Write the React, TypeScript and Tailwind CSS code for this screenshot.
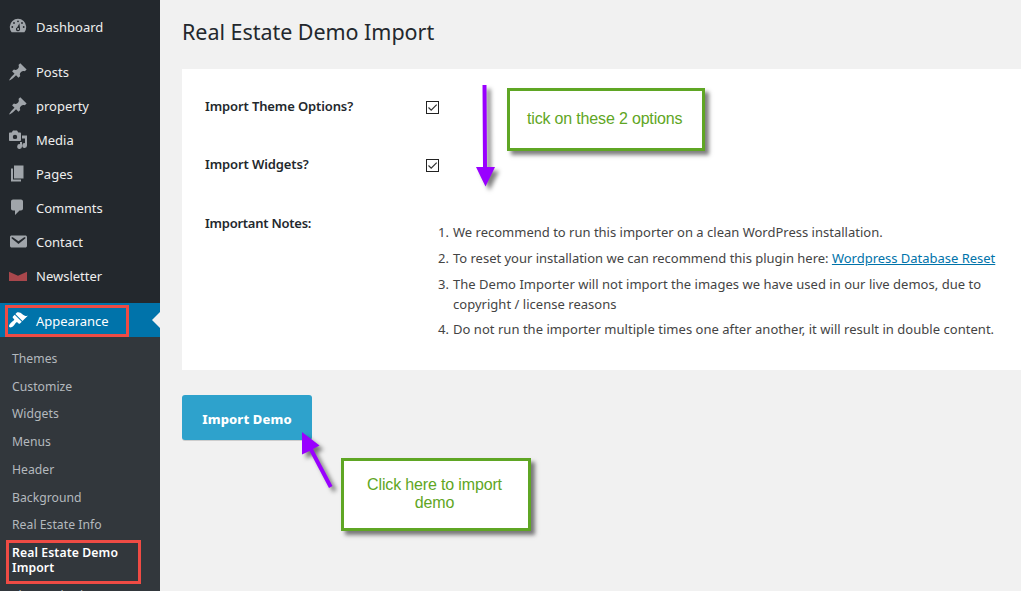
import React from "react";

const items = [
  ["Posts", "pin"],
  ["property", "pin"],
  ["Media", "media"],
  ["Pages", "pages"],
  ["Comments", "comment"],
  ["Contact", "mail"],
  ["Newsletter", "news"],
];

const sub = ["Themes", "Customize", "Widgets", "Menus", "Header", "Background", "Real Estate Info"];

function Icon({ name }: { name: string }) {
  return (
    <svg viewBox="0 0 20 20" className="h-5 w-5 shrink-0 fill-[#a0a5aa]">
      {name === "dash" && (
        <>
          <path d="M3.600 15.200A8.200 8.200 0 1 1 16.400 15.200z" />
          <g className="fill-[#23282d]">
            <circle cx="10" cy="4.300" r="0.900" />
            <circle cx="6" cy="6" r="0.900" />
            <circle cx="14" cy="6" r="0.900" />
            <circle cx="4.300" cy="10" r="0.900" />
            <circle cx="15.700" cy="10" r="0.900" />
            <path d="M11.400 6.200l.7 5.800a2.100 2.100 0 1 1-2.800-1.800z" />
          </g>
          <circle cx="10.100" cy="12" r="1" />
        </>
      )}
      {name === "pin" && (
        <path d="M10.440 3.020l1.820-1.820 6.360 6.350-1.830 1.820c-1.050-.680-2.480-.570-3.410.360l-.750.750c-.920.930-1.040 2.350-.350 3.410l-1.830 1.820-2.410-2.410-2.800 2.790c-.420.420-3.380 2.710-3.800 2.290s1.860-3.390 2.280-3.810l2.790-2.790L4.100 9.360l1.830-1.820c1.050.690 2.480.570 3.400-.360l.750-.750c.930-.920 1.050-2.350.360-3.410z" />
      )}
      {name === "media" && (
        <path fillRule="evenodd" d="M13 10V3.500c0-.550-.450-1-1-1h-1.670L9 .5H5L3.670 2.500H2c-.550 0-1 .450-1 1V10c0 .550.450 1 1 1h10c.550 0 1-.450 1-1zM7 4.700a2.200 2.200 0 1 1 0 4.400 2.200 2.200 0 0 1 0-4.400zM14 5.500h5V15.500a2.400 2.400 0 1 1-2-2.350V8.500h-3V16.500a2.400 2.400 0 1 1-2-2.350V12h2z" />
      )}
      {name === "pages" && <path d="M6 14.500V1.500h9.500v13H6zM5 15.500h8v2H3V4.500h2v11z" />}
      {name === "comment" && (
        <path d="M5 1.500h8c1.100 0 2 .9 2 2v7c0 1.100-.9 2-2 2h-1.500l-4.500 4.500v-4.500H5c-1.100 0-2-.9-2-2v-7c0-1.100.9-2 2-2z" />
      )}
      {name === "mail" && (
        <path d="M3.870 3.500h13.250C18.370 3.500 19 4.090 19 5.290v8.420c0 1.190-.630 1.790-1.880 1.790H3.870c-1.250 0-1.880-.6-1.880-1.790V5.290c0-1.200.630-1.790 1.880-1.790zm6.620 8.600l6.740-5.530c.240-.200.430-.660.130-1.070-.290-.410-.820-.420-1.170-.170l-5.700 3.860L4.800 5.330c-.350-.250-.880-.240-1.170.170-.300.410-.110.870.130 1.070z" />
      )}
      {name === "news" && <path className="fill-[#a8474c]" d="M1 5.800l9 4L19 5.800V15H1z" />}
      {name === "brush" && (
        <path className="fill-white" d="M14.480 11.060L7.410 3.990l1.500-1.500c.5-.560 2.300-.470 3.510.320 1.210.8 1.430 1.280 2.910 2.100 1.180.640 2.450 1.260 4.450.850zm-.710.710L6.700 4.700 4.930 6.470c-.390.390-.390 1.020 0 1.410l1.060 1.060c.390.390.390 1.030 0 1.420-.6.600-1.430 1.110-2.210 1.690-.350.260-.7.530-1.010.840C1.430 14.230.4 16.080 1.400 17.070c.990 1 2.840-.030 4.180-1.360.310-.310.580-.660.850-1.020.570-.780 1.080-1.610 1.690-2.210.390-.390 1.020-.390 1.410 0l1.060 1.060c.390.390 1.020.390 1.410 0z" />
      )}
    </svg>
  );
}

function Check() {
  return (
    <div role="checkbox" aria-checked="true" className="h-[13px] w-[13px] border border-[#222] bg-white">
      <svg viewBox="0 0 11 11" className="h-[11px] w-[11px]">
        <path d="M1.500 5.500L4.200 8.200L9.700 2.700" fill="none" stroke="#333" strokeWidth="1.200" />
      </svg>
    </div>
  );
}

export default function App() {
  return (
    <div className="relative flex h-[591px] w-[1021px] overflow-hidden bg-[#f1f1f1] font-['Noto_Sans',sans-serif] text-[13px] text-[#444]">
      <nav className="h-[591px] w-40 shrink-0 overflow-hidden bg-[#23282d] text-[13px] text-[#eee]">
        <div className="mt-[10px] flex h-[34px] items-center gap-2 pl-2">
          <Icon name="dash" />
          <span className="pt-[2px]">Dashboard</span>
        </div>
        <div className="mt-[11px]">
          {items.map(([label, icon]) => (
            <div key={label} className="flex h-[34px] items-center gap-2 pl-2">
              <Icon name={icon} />
              <span className="pt-[2px]">{label}</span>
            </div>
          ))}
        </div>
        <div className="relative mt-[10px] flex h-[34px] items-center gap-2 bg-[#0073aa] pl-2 text-white">
          <Icon name="brush" />
          <span className="pt-[3px] tracking-[-0.05px]">Appearance</span>
          <svg viewBox="0 0 8 16" className="absolute right-0 top-[9px] h-4 w-2 fill-[#f1f1f1]">
            <path d="M8 0v16L0 8z" />
          </svg>
        </div>
        <div className="h-[260px] bg-[#32373c] pl-3 pt-[8.400px] text-[12.200px] text-[#b4b9be]">
          {sub.map((label) => (
            <div key={label} className="flex h-[27.700px] items-center whitespace-nowrap tracking-[0.03px]">
              {label}
            </div>
          ))}
          <div className="pt-[5.600px] font-semibold leading-[15px] tracking-[0.12px] text-white">
            Real Estate Demo
            <br />
            Import
          </div>
          <div className="mt-[13px] leading-[16px] tracking-[-0.25px]">Theme Check</div>
        </div>
      </nav>

      <main className="flex min-w-0 flex-1 flex-col pl-[22px]">
        <h1 className="mt-[17px] h-[30px] text-[21.500px] leading-[30px] tracking-[-0.04px] text-[#23282d]">
          <span>Real Estate Demo Import</span>
        </h1>
        <section className="mt-[22px] h-[301px] bg-white pl-[23px] text-[#23282d]">
          <div className="flex h-[58px] pt-[27px]">
            <div className="w-[221px] font-semibold leading-5 tracking-[-0.12px]">Import Theme Options?</div>
            <div className="pt-[5px]"><Check /></div>
          </div>
          <div className="flex h-[58px] pt-[27px]">
            <div className="w-[221px] font-semibold leading-5 tracking-[-0.12px]">Import Widgets?</div>
            <div className="pt-[5px]"><Check /></div>
          </div>
          <div className="flex pt-[28px]">
            <div className="w-[221px] shrink-0 font-semibold leading-5 tracking-[-0.25px]">Important Notes:</div>
            <ol className="flex flex-col gap-[6px] pt-[9px] leading-5 text-[#444]">
              <li className="flex h-5 whitespace-nowrap"><span className="w-[27px] pl-[12px]">1.</span><span>We recommend to run this importer on a clean WordPress installation.</span></li>
              <li className="flex h-5 whitespace-nowrap"><span className="w-[27px] pl-[12px]">2.</span><span className="tracking-[-0.015px]">To reset your installation we can recommend this plugin here: <a className="text-[#0073aa] underline">Wordpress Database Reset</a></span></li>
              <li className="flex h-[39px] whitespace-nowrap"><span className="w-[27px] pl-[12px]">3.</span><span className="tracking-[0.024px]">The Demo Importer will not import the images we have used in our live demos, due to<br />copyright / license reasons</span></li>
              <li className="flex h-5 whitespace-nowrap"><span className="w-[27px] pl-[12px]">4.</span><span className="tracking-[0.033px]">Do not run the importer multiple times one after another, it will result in double content.</span></li>
            </ol>
          </div>
        </section>
        <button className="mt-[25px] h-[45px] w-[130px] rounded-[3px] bg-[#2ea2cc] pt-[4px] text-[13px] font-extrabold tracking-[0.12px] text-white shadow-[0_1px_0_rgba(0,0,0,0.15)]">
          Import Demo
        </button>
      </main>

      <div className="absolute left-[5px] top-[305px] h-[32px] w-[124px] border-[3px] border-[#ef4b44]" />
      <div className="absolute left-[6px] top-[540px] h-[44px] w-[135px] border-[3px] border-[#ef4b44]" />

      <div className="absolute left-[507px] top-[88px] flex h-[63px] w-[198px] items-center border-[3px] border-[#5fa624] bg-white pb-[2px] pl-[17px] font-['Liberation_Sans',sans-serif] text-base tracking-[-0.17px] text-[#5fa624] shadow-[4px_4px_4px_rgba(0,0,0,0.5)]">
        <span>tick on these 2 options</span>
      </div>
      <div className="absolute left-[341px] top-[458px] flex h-[73px] w-[190px] items-center justify-center border-[3px] border-[#5fa624] bg-white pb-[2px] pr-[3px] text-center font-['Liberation_Sans',sans-serif] text-base leading-[18px] tracking-[-0.15px] text-[#5fa624] shadow-[4px_4px_4px_rgba(0,0,0,0.5)]">
        <span>Click here to import<br />demo</span>
      </div>

      <svg viewBox="0 0 40 120" className="absolute left-[470px] top-[80px] h-[120px] w-[40px] fill-[#9900ff] drop-shadow-[4px_4px_2px_rgba(0,0,0,0.5)]">
        <path d="M12.500 5h4l.500 82h8L15.500 106.500L6 87h7z" />
      </svg>
      <svg viewBox="0 0 50 70" className="absolute left-[295px] top-[425px] h-[70px] w-[50px] fill-[#9900ff] drop-shadow-[4px_4px_2px_rgba(0,0,0,0.5)]">
        <path d="M7 7L24.500 20.500L18 24L37.500 61L34 63L14.500 26L7 29.500z" />
      </svg>
    </div>
  );
}
